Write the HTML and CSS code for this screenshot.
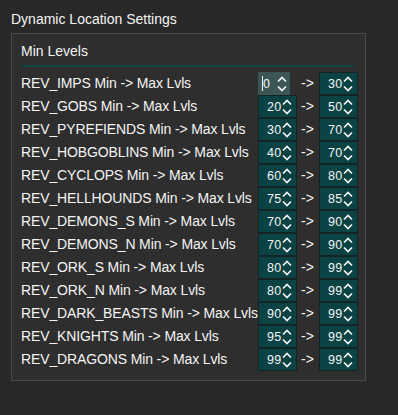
FILE: index.html
```html
<!DOCTYPE html>
<html>
    <head>
        <meta charset="utf-8">
        <title>Dynamic Location Settings</title>
        <link rel="stylesheet" href="styles.css">
    </head>
    <body>
        <div id="title">Dynamic Location Settings</div>
        <div id="frame">
            <div id="group-title">Min Levels</div>
            <div id="rows"></div>
        </div>
        <script>
            const rows = [
                ['REV_IMPS', 0, 30],
                ['REV_GOBS', 20, 50],
                ['REV_PYREFIENDS', 30, 70],
                ['REV_HOBGOBLINS', 40, 70],
                ['REV_CYCLOPS', 60, 80],
                ['REV_HELLHOUNDS', 75, 85],
                ['REV_DEMONS_S', 70, 90],
                ['REV_DEMONS_N', 70, 90],
                ['REV_ORK_S', 80, 99],
                ['REV_ORK_N', 80, 99],
                ['REV_DARK_BEASTS', 90, 99],
                ['REV_KNIGHTS', 95, 99],
                ['REV_DRAGONS', 99, 99]
            ];
            const arrows = '<svg class="arrows" width="10" height="18" viewBox="0 0 10 18">'
                + '<polyline points="1,6.5 5,2.5 9,6.5" />'
                + '<polyline points="1,11.5 5,15.5 9,11.5" /></svg>';
            const cont = document.getElementById('rows');
            rows.forEach((r, i) => {
                const row = document.createElement('div');
                row.className = 'row';
                const first = i === 0
                    ? `<div class="spin focused"><span class="val"><span class="caret"></span>0</span>${arrows}</div>`
                    : `<div class="spin"><span class="val">${r[1]}</span>${arrows}</div>`;
                row.innerHTML = `<div class="label"><span>${r[0]} Min -&gt; Max Lvls</span></div>`
                    + `<div class="cell">${first}</div>`
                    + `<span class="to">-&gt;</span>`
                    + `<div class="cell"><div class="spin"><span class="val">${r[2]}</span>${arrows}</div></div>`;
                cont.appendChild(row);
            });
        </script>
    </body>
</html>
```

FILE: styles.css
```css
body {
    margin: 0px;
    padding: 0px;
    background-color: #282828;
    color: #f4f4f4;
    font-family: "Liberation Sans", Arial, sans-serif;
    font-size: 14px;
    width: 398px;
    height: 415px;
}
#title {
    padding: 11px 0px 0px 11px;
    height: 22px;
    line-height: 17px;
}
#frame {
    margin-left: 11px;
    width: 353px;
    height: 346px;
    border: 1px solid #4a4a4a;
    background-color: #2e2e2e;
}
#group-title {
    margin: 0px 10px 0px 9px;
    padding-top: 9px;
    height: 22px;
    line-height: 17px;
    border-bottom: 2px solid #0b4547;
}
#rows {
    padding: 5px 0px 0px 9px;
    display: flex;
    flex-direction: column;
    gap: 1px;
}
.row {
    display: flex;
    align-items: center;
    height: 22px;
}
.label {
    flex: none;
    width: 237px;
    white-space: nowrap;
    letter-spacing: -0.13px;
}
.cell {
    flex: none;
    width: 40px;
    height: 22px;
}
.to {
    flex: none;
    width: 21px;
    padding-right: 2px;
    box-sizing: border-box;
    text-align: center;
}
.spin {
    box-sizing: border-box;
    height: 23px;
    width: 39px;
    background-color: #0b4244;
    border: 1px solid #142324;
    display: flex;
    align-items: center;
    justify-content: space-between;
    padding: 0px 4px 0px 8px;
    font-size: 12.5px;
}
.spin.focused {
    width: 32px;
    background-color: #3c5656;
    border-color: #3c5656;
    padding: 0px 2px 0px 3px;
}
.val {
    display: flex;
    align-items: center;
    letter-spacing: 0.3px;
}
.caret {
    display: inline-block;
    width: 1px;
    height: 15px;
    background-color: #f4f4f4;
}
.arrows polyline {
    fill: none;
    stroke: #f4f4f4;
    stroke-width: 1.7;
}
```
